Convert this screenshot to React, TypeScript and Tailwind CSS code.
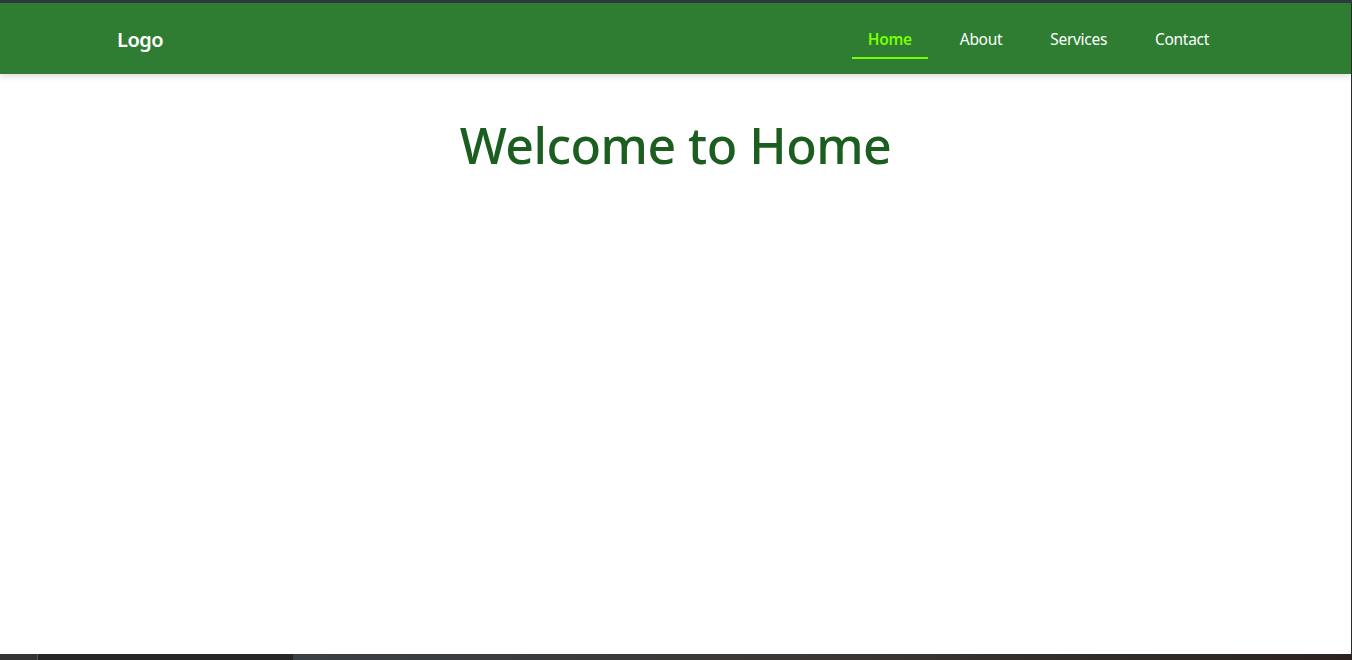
import React, { useState } from 'react';

const links = ['Home', 'About', 'Services', 'Contact'];

const App: React.FC = () => {
  const [active, setActive] = useState('Home');

  return (
    <div className="h-[660px] w-[1352px] bg-[#2f3a40] pt-[3px] font-['Noto_Sans',sans-serif] overflow-hidden flex flex-col">
      <div className="flex-1 flex">
        <div className="flex-1 bg-white flex flex-col">
          {/* Navbar */}
          <nav className="h-[71px] bg-[#2e7d32] shadow-[0_3px_6px_rgba(0,0,0,0.12)] flex items-center justify-between pl-[117px] pr-[126px] pt-[3px] relative z-10">
            <span className="text-white text-[20px] font-semibold tracking-tight">Logo</span>
            <ul className="flex items-center gap-4">
              {links.map(l => (
                <li key={l}>
                  <button
                    onClick={() => setActive(l)}
                    className={`relative px-4 h-[38px] text-[15.5px] tracking-[-0.3px] ${active === l ? 'text-[#76ff03] font-semibold' : 'text-white'}`}
                  >
                    {l}
                    {active === l && <span className="absolute left-0 right-0 bottom-0 h-[2px] bg-[#76ff03]" />}
                  </button>
                </li>
              ))}
            </ul>
          </nav>

          <main className="flex-1 pt-[39px]">
            <h1 className="text-center text-[#1b5e20] text-[50px] font-[550] tracking-[-0.5px] leading-[1.3]">
              Welcome to {active}
            </h1>
          </main>
        </div>
        <div className="w-[1px] bg-[#2b2b2b]" />
      </div>
      <div className="h-[6px] flex bg-[#2a2a2a]">
        <div className="w-[37px] bg-[#333]" />
        <div className="w-[256px] bg-[#262626] border-l border-[#555]" />
        <div className="flex-1 bg-gradient-to-r from-[#3a4045] via-[#3b3633] to-[#2a2320]" />
      </div>
    </div>
  );
};

export default App;
